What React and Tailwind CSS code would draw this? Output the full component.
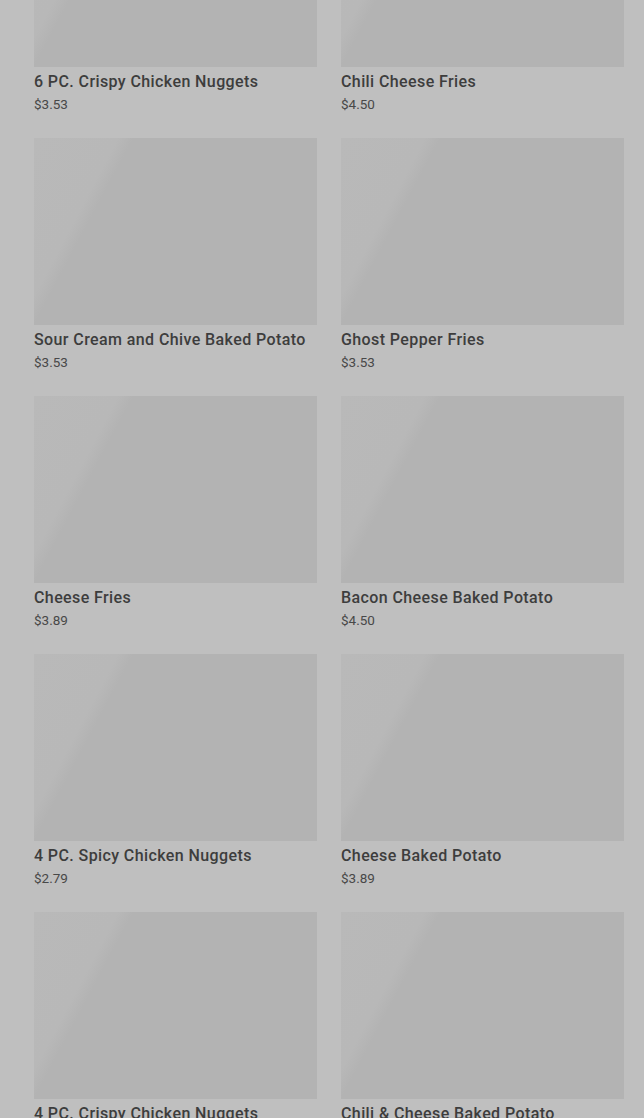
import React from "react";

const items = [
  ["6 PC. Crispy Chicken Nuggets", "$3.53"],
  ["Chili Cheese Fries", "$4.50"],
  ["Sour Cream and Chive Baked Potato", "$3.53"],
  ["Ghost Pepper Fries", "$3.53"],
  ["Cheese Fries", "$3.89"],
  ["Bacon Cheese Baked Potato", "$4.50"],
  ["4 PC. Spicy Chicken Nuggets", "$2.79"],
  ["Cheese Baked Potato", "$3.89"],
  ["4 PC. Crispy Chicken Nuggets", "$2.79"],
  ["Chili & Cheese Baked Potato", "$3.89"],
];

export default function App() {
  return (
    <div
      className="h-[1118px] overflow-hidden bg-[#bfbfbf]"
      style={{ fontFamily: "Roboto, 'Noto Sans', sans-serif" }}
    >
      <div className="-mt-[120px] grid grid-cols-2 gap-x-6 gap-y-6 pl-[34px] pr-[20px]">
        {items.map(([name, price]) => (
          <div key={name} className="flex flex-col">
            <div className="h-[187px] bg-[linear-gradient(118deg,#b9b9b9_0%,#b8b8b8_22%,#b3b3b3_26%,#b3b3b3_100%)]" />
            <div className="mt-[3px] h-6 text-[16px] leading-6 font-medium text-[#3d3d3d] whitespace-nowrap tracking-[0.4px]">
              {name}
            </div>
            <div className="h-5 text-[13.5px] leading-5 text-[#484848]">{price}</div>
          </div>
        ))}
      </div>
    </div>
  );
}
